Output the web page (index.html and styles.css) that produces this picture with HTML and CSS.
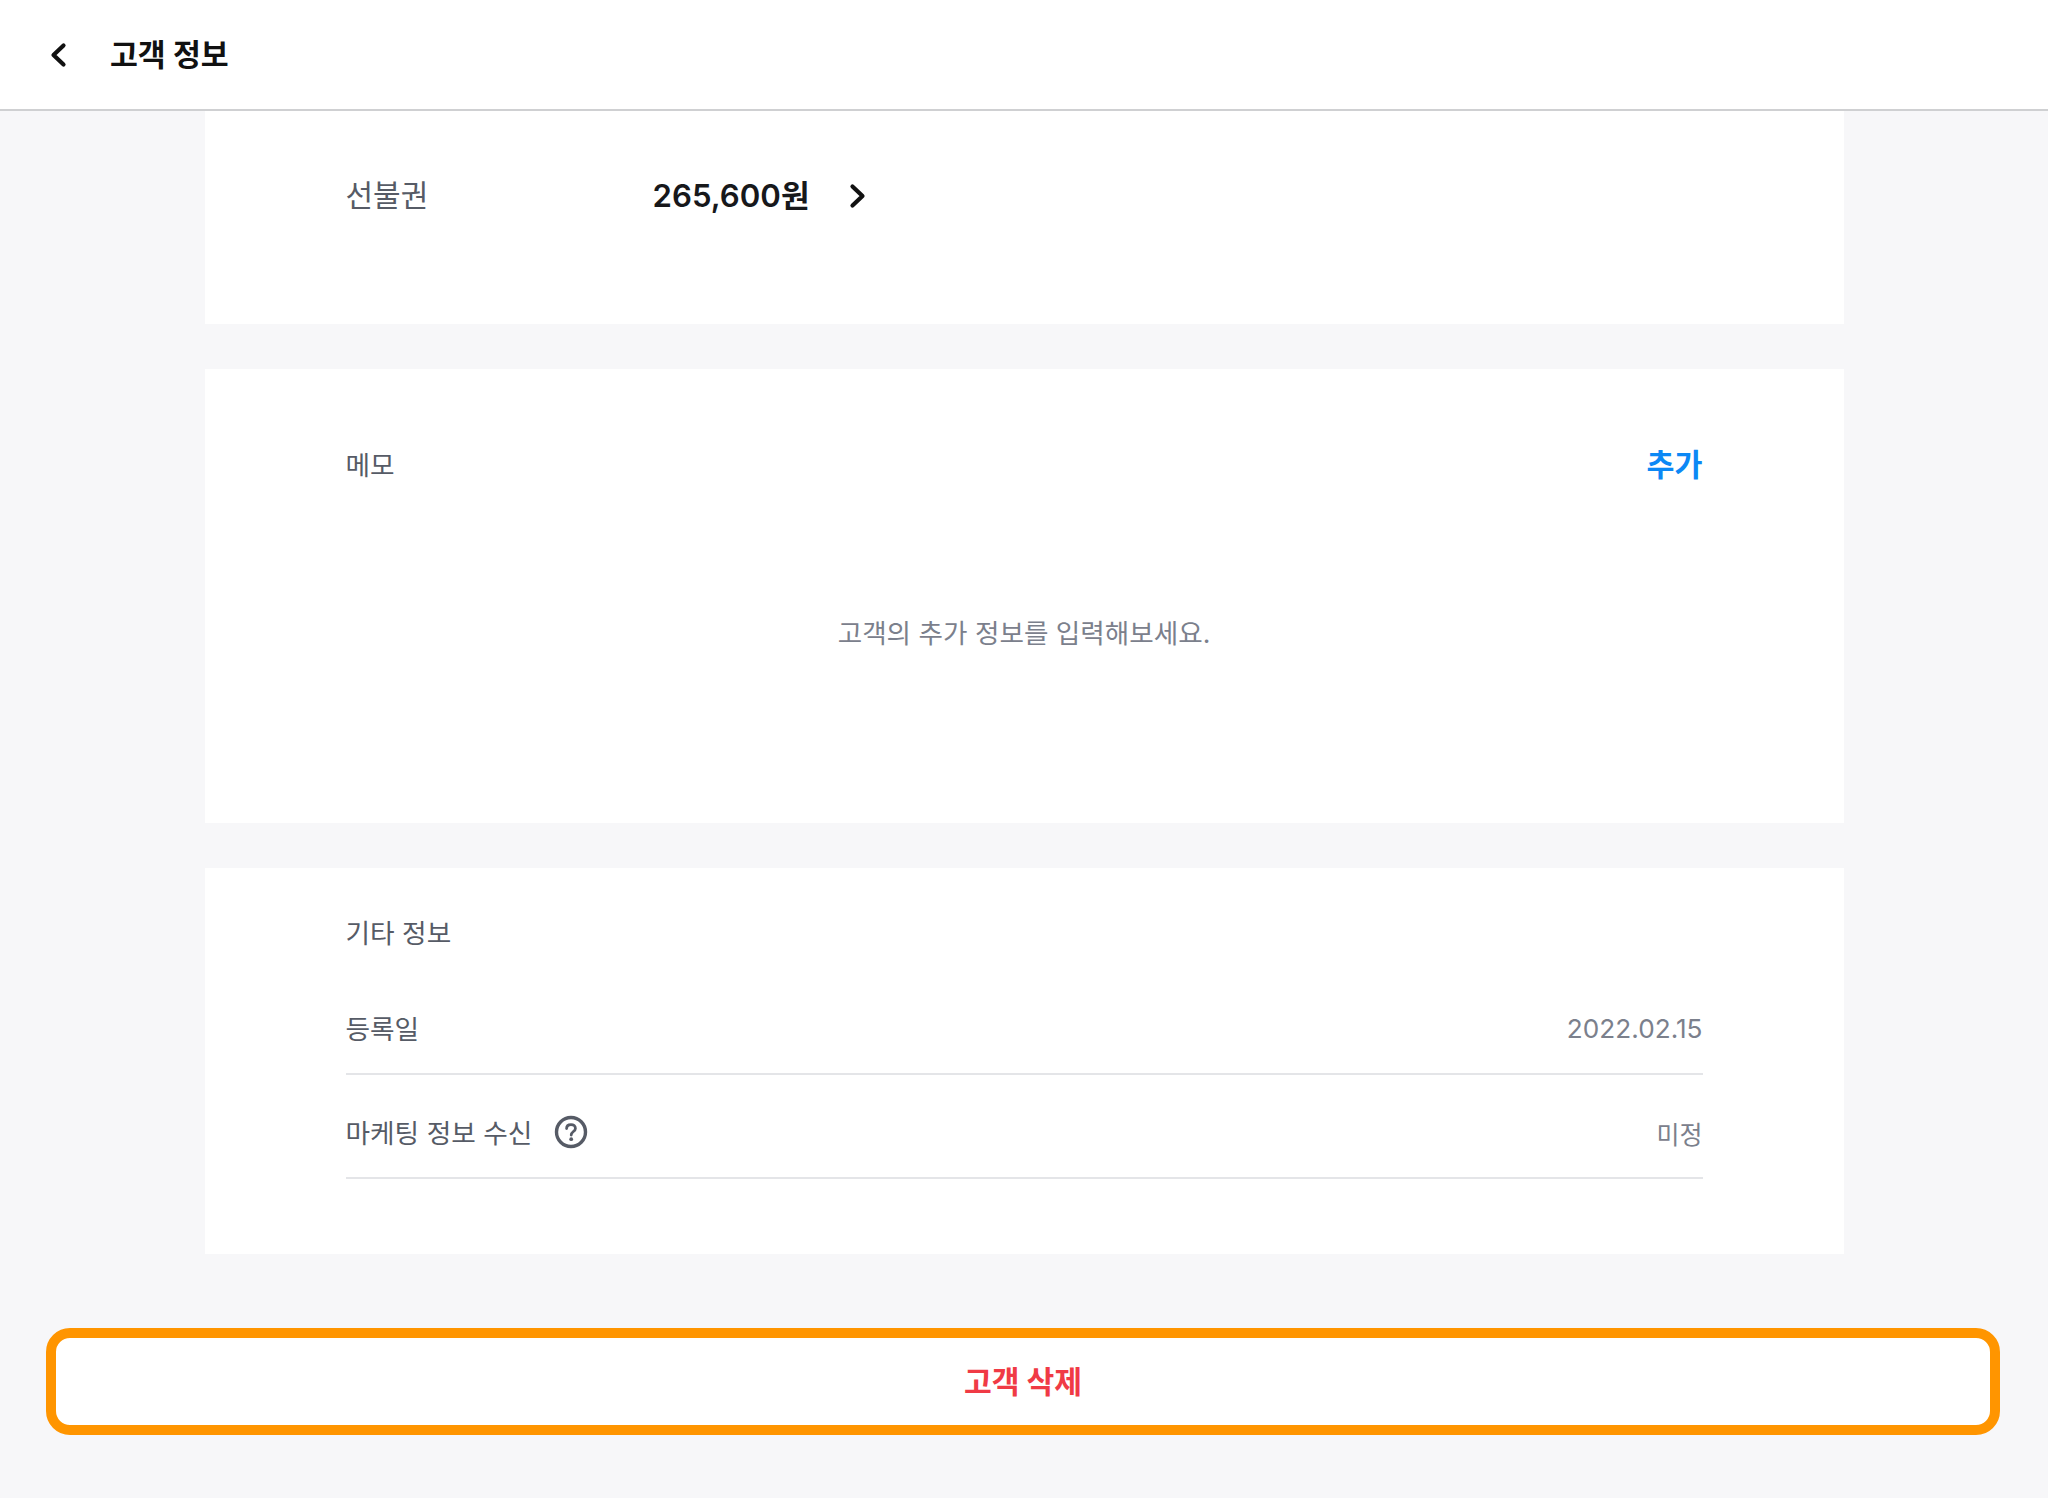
FILE: index.html
```html
<!doctype html>
<html lang="ko">
    <head>
        <meta charset="utf-8">
        <title>고객 정보</title>
        <link rel="stylesheet" href="styles.css">
    </head>

    <body>
        <div class="headbar">
            <svg class="backicon" width="20" height="28" viewBox="0 0 20 28">
                <path d="M15.5 4.5 L5.5 14 L15.5 23.5" fill="none" stroke="#111" stroke-width="4.2" stroke-linecap="round" stroke-linejoin="round"/>
            </svg>
            <div class="headtitle">고객 정보</div>
        </div>

        <div class="content">
            <div class="card giftcard">
                <div class="giftlabel">선불권</div>
                <div class="giftvalue">265,600원</div>
                <svg class="nexticon" width="20" height="28" viewBox="0 0 20 28">
                    <path d="M4.5 4.5 L14.5 14 L4.5 23.5" fill="none" stroke="#111" stroke-width="4.2" stroke-linecap="round" stroke-linejoin="round"/>
                </svg>
            </div>

            <div class="card memocard">
                <div class="memohead">
                    <div class="label">메모</div>
                    <div class="addlink">추가</div>
                </div>
                <div class="memoempty">고객의 추가 정보를 입력해보세요.</div>
            </div>

            <div class="card infocard">
                <div class="label infotitle">기타 정보</div>
                <div class="inforow">
                    <div class="label">등록일</div>
                    <div class="infovalue">2022.02.15</div>
                </div>
                <div class="inforow">
                    <div class="label marketing">
                        마케팅 정보 수신
                        <svg class="helpicon" width="34" height="34" viewBox="0 0 34 34">
                            <circle cx="17" cy="17" r="14.5" fill="none" stroke="#565b66" stroke-width="3.4"/>
                            <path d="M12.6 13.6 C12.6 11 14.6 9.6 17 9.6 C19.6 9.6 21.4 11.2 21.4 13.4 C21.4 16.4 17.2 16.6 17.2 20" fill="none" stroke="#565b66" stroke-width="2.8" stroke-linecap="round"/>
                            <circle cx="17.2" cy="24.2" r="1.9" fill="#565b66"/>
                        </svg>
                    </div>
                    <div class="infovalue unset">미정</div>
                </div>
            </div>

            <div class="deletewrap">
                <div class="deletebtn">고객 삭제</div>
            </div>
        </div>
    </body>
</html>
```

FILE: styles.css
```css
html, body{
    margin: 0px;
    height: 100%;
}

body{
    background-color: #f7f7f9;
    font-family: 'Inter', 'Noto Sans CJK KR', sans-serif;
    overflow: hidden;
}

.headbar{
    background-color: white;
    border-bottom: 2px solid #cfd0d2;
    height: 109px;
    display: flex;
    align-items: center;
    padding-left: 48px;
}

.backicon{
    margin-right: 42px;
}

.headtitle{
    color: #111;
    font-size: 30.3px;
    font-weight: 700;
    margin-top: -4px;
}

.content{
    display: flex;
    flex-direction: column;
    align-items: center;
}

.card{
    background-color: white;
    width: 1639px;
    box-sizing: border-box;
    padding: 0px 141px;
    margin-bottom: 45px;
}

.label{
    color: #565b66;
    font-size: 26.7px;
}

.giftcard{
    height: 213px;
    display: flex;
    align-items: flex-start;
    padding-top: 60px;
}

.giftlabel{
    color: #565b66;
    font-size: 30px;
    width: 307px;
}

.giftvalue{
    color: #17181b;
    font-size: 31.2px;
    font-weight: 600;
}

.nexticon{
    margin: 11px 0px 0px 38px;
}

.memocard{
    height: 454px;
    padding-top: 72px;
}

.memohead{
    display: flex;
    justify-content: space-between;
    align-items: center;
}

.addlink{
    color: #0c88f5;
    font-size: 30.4px;
    font-weight: 700;
}

.memoempty{
    color: #7b808c;
    font-size: 26.6px;
    text-align: center;
    margin-top: 127px;
}

.infocard{
    height: 386px;
    padding-top: 44px;
}

.infotitle{
    margin-bottom: 20px;
}

.inforow{
    display: flex;
    justify-content: space-between;
    align-items: center;
    height: 92px;
    padding-top: 10px;
    border-bottom: 2px solid #e4e5e8;
}

.marketing{
    display: flex;
    align-items: center;
    gap: 22px;
}

.helpicon{
    margin-top: 2px;
}

.infovalue{
    color: #7b808c;
    font-size: 26.2px;
    margin-top: 3px;
}

.unset{
    font-size: 25px;
}

.deletewrap{
    width: 100%;
    box-sizing: border-box;
    padding: 29px 48px 0px 46px;
}

.deletebtn{
    background-color: white;
    border: 10px solid #ff9500;
    border-radius: 24px;
    height: 87px;
    line-height: 88px;
    color: #f03a45;
    font-size: 30.2px;
    font-weight: 700;
    text-align: center;
}
```
